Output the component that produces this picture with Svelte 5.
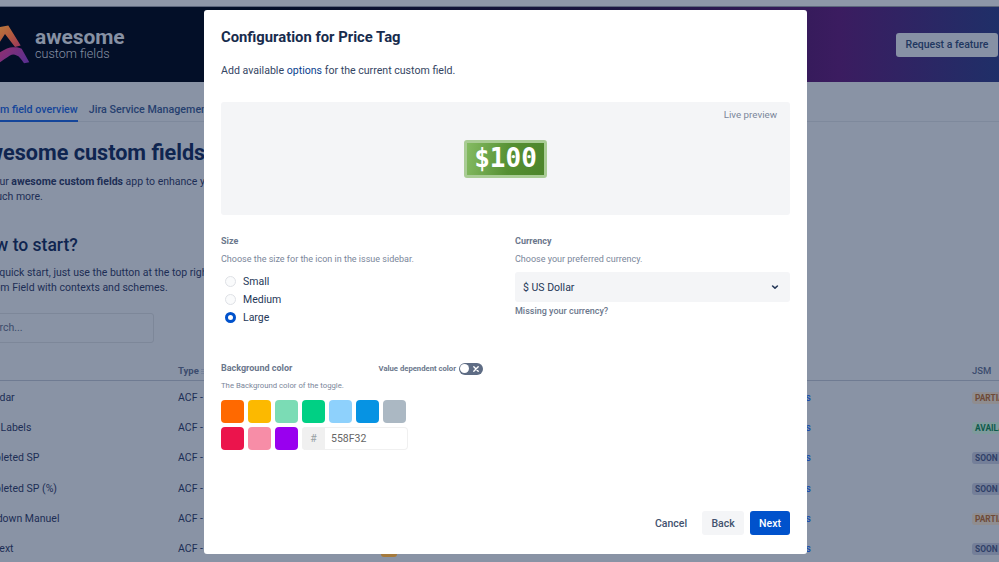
<script>
  const rows = [
    { name: 'Calendar', jsm: 'PARTIAL', kind: 'partial' },
    { name: 'Color Labels', jsm: 'AVAILABLE', kind: 'avail' },
    { name: 'Completed SP', jsm: 'SOON', kind: 'soon' },
    { name: 'Completed SP (%)', jsm: 'SOON', kind: 'soon' },
    { name: 'Markdown Manuel', jsm: 'PARTIAL', kind: 'partial' },
    { name: 'Rich text', jsm: 'SOON', kind: 'soon' }
  ];
  const swatches = ['#FF6900', '#FCB900', '#7BDCB5', '#00D084', '#8ED1FC', '#0693E3', '#ABB8C3', '#EB144C', '#F78DA7', '#9900EF'];
  const sizes = ['Small', 'Medium', 'Large'];
</script>

<div class="page">
  <div class="strip"></div>
  <header class="brand">
    <svg class="logo" width="40" height="42" viewBox="0 0 40 42" aria-hidden="true">
      <defs>
        <linearGradient id="lg1" x1="0" y1="0" x2="1" y2="1">
          <stop offset="0" stop-color="#b9803c" />
          <stop offset="0.55" stop-color="#b45a3f" />
          <stop offset="1" stop-color="#97345f" />
        </linearGradient>
        <linearGradient id="lg2" x1="0" y1="0" x2="1" y2="0.5">
          <stop offset="0" stop-color="#9c3068" />
          <stop offset="1" stop-color="#5d2f8f" />
        </linearGradient>
      </defs>
      <path d="M0 14 L8 3 L16.3 1.5 L28.7 21.5 L23 23 L13 10 L4 24 Z" fill="url(#lg1)" />
      <path d="M0 33 L8 28.2 C13 25 18 23 21.3 23.2 C25 23 28 23.5 29.7 24.8 L37.3 38.2 L32 39.2 C29 35 27 32 24.7 31.5 C22 30 20 30.5 18 31.5 C14 34 10 37 8 38.2 L0 42 Z" fill="url(#lg2)" />
    </svg>
    <div class="wordmark">
      <span class="w1">awesome</span>
      <span class="w2">custom fields</span>
    </div>
    <button class="req">Request a feature</button>
  </header>
  <nav class="tabs">
    <div class="tab active">Custom field overview</div>
    <div class="tab">Jira Service Management</div>
  </nav>
  <main class="body">
    <h1>Awesome custom fields</h1>
    <p>Use our <b>awesome custom fields</b> app to enhance your Jira issues with charts, calendars and<br />so much more.</p>
    <h2>How to start?</h2>
    <p>For a quick start, just use the button at the top right corner to add a new<br />Custom Field with contexts and schemes.</p>
    <div class="search">Search...</div>
    <div class="thead">
      <span class="c-name">Name</span>
      <span class="c-type">Type <svg class="sort" width="6" height="7" viewBox="0 0 6 7" aria-hidden="true"><path d="M0 1.5 H6 M0 3.5 H6 M0 5.5 H6" stroke="#76829a" stroke-width="1" /></svg></span>
      <span class="c-jsm">JSM</span>
    </div>
    {#each rows as r}
      <div class="trow">
        <span class="c-name">{r.name}</span>
        <span class="c-type">ACF - Custom</span>
        <span class="c-link">Contexts</span>
        <span class="c-jsm"><span class="lozenge {r.kind}">{r.jsm}</span></span>
      </div>
    {/each}
  </main>
  <div class="orange"></div>

  <div class="modal-wrap">
    <section class="modal">
      <h3>Configuration for Price Tag</h3>
      <p class="sub">Add available <span class="opt">options</span> for the current custom field.</p>

      <div class="preview">
        <span class="live">Live preview</span>
        <div class="tag">$100</div>
      </div>

      <div class="cols">
        <div class="col">
          <div class="label">Size</div>
          <div class="hint">Choose the size for the icon in the issue sidebar.</div>
          <div class="radios">
            {#each sizes as s}
              <div class="radio-row">
                <span class="radio" class:on={s === 'Large'}></span>
                <span>{s}</span>
              </div>
            {/each}
          </div>
        </div>
        <div class="col">
          <div class="label">Currency</div>
          <div class="hint">Choose your preferred currency.</div>
          <div class="select">
            <span>$ US Dollar</span>
            <svg width="12" height="12" viewBox="0 0 12 12" aria-hidden="true"><path d="M3.6 5 L6 7.2 L8.4 5" fill="none" stroke="#253858" stroke-width="1.6" stroke-linecap="round" stroke-linejoin="round" /></svg>
          </div>
          <div class="missing">Missing your currency?</div>
        </div>
      </div>

      <div class="color-block">
        <div class="color-head">
          <span class="label">Background color</span>
          <span class="vd">
            <span class="vd-text">Value dependent color</span>
            <span class="toggle">
              <span class="knob"></span>
              <svg width="8" height="8" viewBox="0 0 8 8" aria-hidden="true"><path d="M1.8 1.8 L6.2 6.2 M6.2 1.8 L1.8 6.2" stroke="#fff" stroke-width="1.4" stroke-linecap="round" /></svg>
            </span>
          </span>
        </div>
        <div class="bg-hint">The Background color of the toggle.</div>
        <div class="swatches">
          {#each swatches as c}
            <span class="swatch" style:background={c}></span>
          {/each}
          <div class="hex">
            <span class="hash">#</span>
            <span class="hexval">558F32</span>
          </div>
        </div>
      </div>

      <footer class="actions">
        <button class="btn plain">Cancel</button>
        <button class="btn back">Back</button>
        <button class="btn next">Next</button>
      </footer>
    </section>
  </div>
</div>

<style>
  :global(body) {
    margin: 0;
    background: #8993a5;
  }
  .page {
    position: relative;
    width: 999px;
    height: 562px;
    overflow: hidden;
    background: #8993a5;
    font-family: Roboto, "Liberation Sans", sans-serif;
    color: #1d2e55;
  }
  .strip {
    height: 6px;
    background: #8e97a8;
    border-bottom: 1px solid #5c667c;
  }
  .brand {
    height: 75px;
    display: flex;
    align-items: center;
    background: linear-gradient(90deg, #030f28 0%, #030f28 25%, #1a1540 60%, #3b1c60 84%, #1f2f68 100%);
    padding-right: 1px;
  }
  .logo {
    margin-left: -8px;
    margin-right: 3px;
    flex: none;
  }
  .wordmark {
    display: flex;
    flex-direction: column;
    padding-bottom: 2px;
    color: #8791a4;
  }
  .w1 {
    font-size: 21px;
    font-weight: 700;
    line-height: 20px;
    letter-spacing: -0.1px;
  }
  .w2 {
    font-size: 12.6px;
    font-weight: 300;
    line-height: 13px;
  }
  .req {
    margin-left: auto;
    height: 24px;
    width: 102px;
    padding: 0;
    border: none;
    border-radius: 3px;
    background: #8791a5;
    color: #213760;
    font: 500 10.5px Roboto, sans-serif;
  }
  .tabs {
    display: flex;
    height: 39px;
    margin-left: -28px;
    gap: 11px;
    border-bottom: 1px solid #7e899c;
    box-sizing: content-box;
  }
  .tab {
    height: 38px;
    font-size: 10.7px;
    font-weight: 500;
    line-height: 55px;
    color: #26406f;
    white-space: nowrap;
  }
  .tab.active {
    color: #14459a;
    border-bottom: 2px solid #14459a;
    margin-bottom: -1px;
  }
  .body {
    margin-left: -27px;
  }
  h1 {
    margin: 18px 0 0;
    font-size: 21.6px;
    line-height: 26px;
    font-weight: 700;
    color: #0f2550;
    white-space: nowrap;
  }
  p {
    margin: 8px 0 0;
    font-size: 10.5px;
    line-height: 15px;
    color: #1d2e55;
    white-space: nowrap;
  }
  h2 {
    margin: 29px 0 0;
    font-size: 17.5px;
    line-height: 24px;
    font-weight: 500;
    color: #0f2550;
  }
  h2 + p {
    margin-top: 8px;
  }
  .search {
    box-sizing: border-box;
    width: 181px;
    height: 30px;
    margin-top: 18px;
    padding-left: 8px;
    border: 1.5px solid #7d8799;
    border-radius: 3px;
    font-size: 10.5px;
    line-height: 27px;
    color: #3c4b6b;
  }
  .thead,
  .trow {
    display: grid;
    grid-template-columns: 205px 794px 200px;
    position: relative;
    width: 1199px;
    font-size: 10.5px;
    white-space: nowrap;
  }
  .thead {
    margin-top: 20px;
    height: 17px;
    font-size: 9.5px;
    font-weight: 700;
    color: #3c4c6e;
    border-bottom: 1px solid #6f7b92;
    line-height: 16px;
  }
  .thead .c-jsm {
    font-weight: 500;
  }
  .sort {
    vertical-align: -0.5px;
  }
  .trow {
    height: 30.2px;
    line-height: 33px;
    font-weight: 400;
    color: #1d2e55;
  }
  .c-name {
    overflow: hidden;
  }
  .c-link {
    position: absolute;
    left: 796px;
    font-weight: 500;
    color: #1a4fae;
  }
  .lozenge {
    display: inline-block;
    padding: 0 3px;
    border-radius: 3px;
    font-size: 8.4px;
    font-weight: 700;
    line-height: 12px;
  }
  .lozenge.partial {
    color: #6e4a38;
    background: #8f8d90;
  }
  .lozenge.avail {
    color: #0c5a4a;
    background: #7f9b9d;
  }
  .lozenge.soon {
    color: #2f3f68;
    background: #747f99;
  }
  .orange {
    position: absolute;
    left: 381px;
    top: 554px;
    width: 16px;
    height: 3px;
    background: #a57a3c;
    border-radius: 0 0 3px 3px;
  }
  .modal-wrap {
    position: absolute;
    inset: 10px 0 8px 204px;
    display: flex;
  }
  .modal {
    box-sizing: border-box;
    width: 603px;
    height: 544px;
    padding: 0 17px;
    display: flex;
    flex-direction: column;
    background: #fff;
    border-radius: 3px;
    color: #172b4d;
  }
  h3 {
    margin: 17px 0 0;
    font-size: 14.8px;
    line-height: 20px;
    font-weight: 700;
    color: #172b4d;
    white-space: nowrap;
  }
  .sub {
    margin: 16px 0 0;
    font-size: 10.6px;
    line-height: 15px;
    color: #344563;
  }
  .opt {
    color: #0a3f8f;
  }
  .preview {
    position: relative;
    height: 113px;
    margin-top: 24px;
    background: #f4f5f7;
    border-radius: 3px;
    display: flex;
    align-items: center;
    justify-content: center;
  }
  .live {
    position: absolute;
    right: 13px;
    top: 6px;
    font-size: 9.75px;
    line-height: 13px;
    color: #7a869a;
  }
  .tag {
    box-sizing: border-box;
    width: 83px;
    height: 38px;
    margin-top: 1px;
    border: 3px solid #a9cc95;
    border-radius: 3px;
    background: linear-gradient(100deg, #84bb62 0%, #558f32 55%, #4d852b 100%);
    color: #fff;
    font: 700 26px/31px "DejaVu Sans Mono", monospace;
    text-align: center;
  }
  .cols {
    display: grid;
    grid-template-columns: 294px 275px;
    height: 109px;
    margin-top: 20px;
  }
  .label {
    font-size: 9px;
    line-height: 13px;
    font-weight: 700;
    color: #6b778c;
  }
  .hint {
    margin-top: 5px;
    font-size: 9px;
    line-height: 13px;
    color: #7a869a;
  }
  .radios {
    margin-top: 6px;
  }
  .radio-row {
    display: flex;
    align-items: center;
    height: 18px;
    font-size: 10.5px;
    color: #253858;
  }
  .radio {
    box-sizing: border-box;
    width: 11px;
    height: 11px;
    margin: 0 7px 0 4px;
    border-radius: 50%;
    background: #fafbfc;
    border: 1.5px solid #dfe1e6;
  }
  .radio.on {
    background: #fff;
    border: 3.5px solid #0052cc;
  }
  .select {
    display: flex;
    align-items: center;
    justify-content: space-between;
    height: 30px;
    margin-top: 6px;
    padding: 0 9px 0 8px;
    background: #f4f5f7;
    border-radius: 3px;
    font-size: 10.5px;
    color: #253858;
  }
  .missing {
    margin-top: 3px;
    font-size: 9px;
    line-height: 13px;
    font-weight: 500;
    color: #6b778c;
  }
  .color-block {
    margin-top: 18px;
    width: 262px;
  }
  .color-head {
    display: flex;
    align-items: center;
    justify-content: space-between;
    height: 13px;
  }
  .vd {
    display: flex;
    align-items: center;
    gap: 3px;
  }
  .vd-text {
    font-size: 7.7px;
    font-weight: 700;
    color: #6b778c;
    white-space: nowrap;
  }
  .toggle {
    box-sizing: border-box;
    display: flex;
    align-items: center;
    justify-content: space-between;
    width: 24px;
    height: 12px;
    padding: 0 3px 0 1px;
    border-radius: 6px;
    background: #5e6c84;
  }
  .knob {
    width: 9px;
    height: 9px;
    border-radius: 50%;
    background: #fff;
  }
  .bg-hint {
    margin-top: 5px;
    font-size: 7.75px;
    line-height: 11px;
    color: #7a869a;
  }
  .swatches {
    display: flex;
    flex-wrap: wrap;
    gap: 4px;
    width: 190px;
    margin-top: 9px;
  }
  .swatch {
    width: 23px;
    height: 23px;
    border-radius: 4px;
  }
  .hex {
    box-sizing: border-box;
    display: flex;
    width: 106px;
    height: 23px;
    border-radius: 4px;
    box-shadow: inset 0 0 0 1px #f0f0f0;
    overflow: hidden;
  }
  .hash {
    width: 23px;
    background: #f0f0f0;
    color: #98a1a4;
    font-size: 10.5px;
    line-height: 23px;
    text-align: center;
  }
  .hexval {
    padding-left: 6px;
    font-size: 10.5px;
    line-height: 23px;
    color: #666;
  }
  .actions {
    margin-top: auto;
    margin-bottom: 19px;
    display: flex;
    justify-content: flex-end;
    gap: 6px;
  }
  .btn {
    height: 24px;
    padding: 0;
    border: none;
    border-radius: 3px;
    font: 500 10.5px Roboto, sans-serif;
    background: none;
  }
  .plain {
    width: 42px;
    margin-right: 4px;
    color: #42526e;
  }
  .back {
    width: 42px;
    background: #f4f5f7;
    color: #42526e;
  }
  .next {
    width: 40px;
    background: #0052cc;
    color: #fff;
  }
</style>
